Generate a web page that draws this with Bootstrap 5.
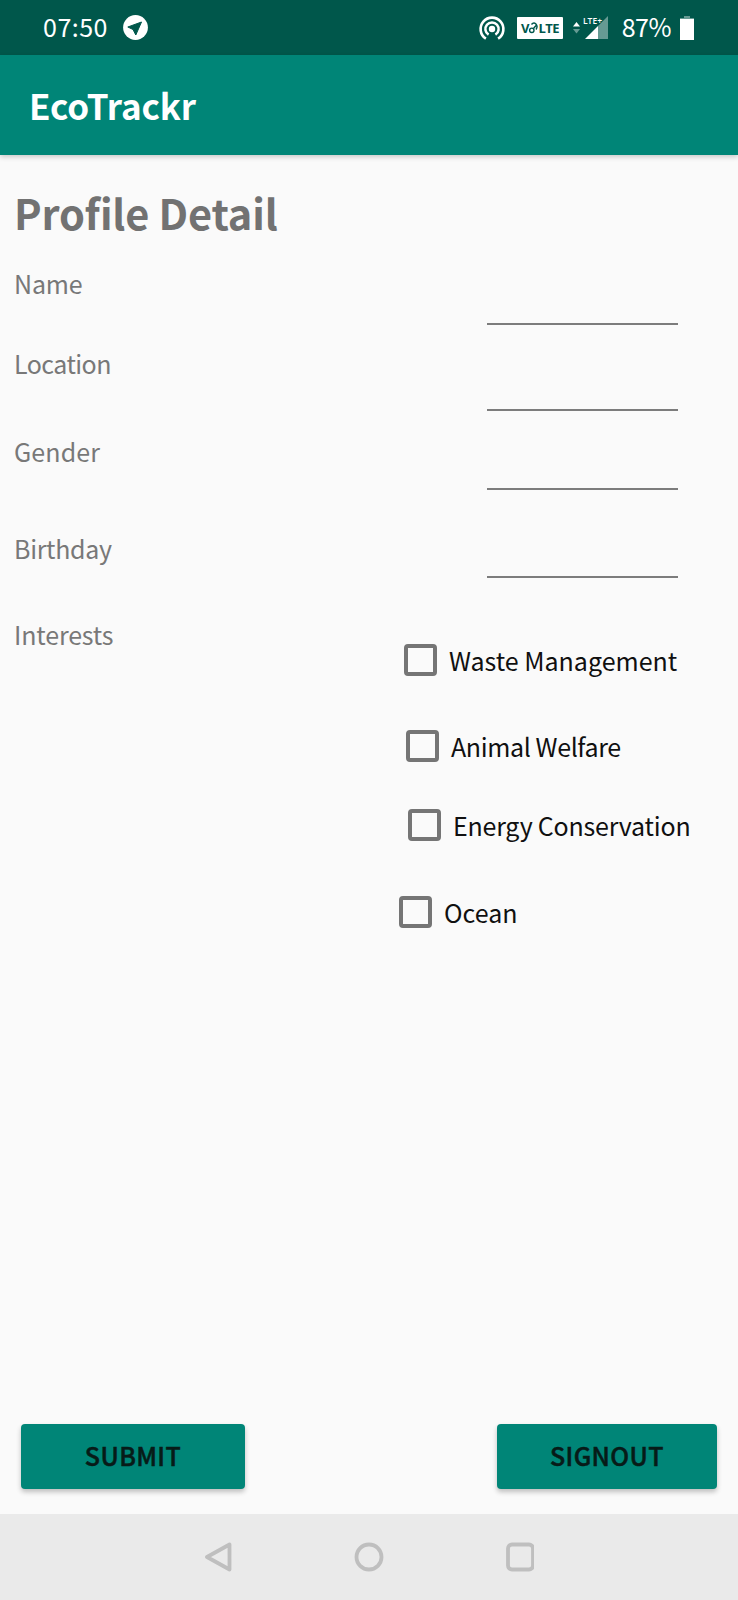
<!DOCTYPE html>
<html lang="en">
<head>
<meta charset="utf-8">
<meta name="viewport" content="width=device-width, initial-scale=1">
<title>EcoTrackr</title>
<link href="https://cdn.jsdelivr.net/npm/bootstrap@5.3.0/dist/css/bootstrap.min.css" rel="stylesheet">
<style>
body{font-family:"Noto Sans CJK SC","Open Sans",sans-serif;font-size:25px;line-height:36px;background:#fafafa;color:#727272;min-height:1600px}
.statusbar{height:55px;background:#00574b;color:#fff;padding:0 44px 0 43px}
.statusbar svg{flex:none;overflow:visible}
.clock{letter-spacing:.5px;padding-bottom:3px}
.telegram{margin-left:15px}
.battery-text{letter-spacing:-.5px;padding-bottom:3px;margin:0 9px 0 12px}
.volte{margin:0 5px 0 8px}
.appbar{height:100px;background:#008577;box-shadow:0 2px 5px rgba(0,0,0,.2);padding:0 29px 1px}
.appbar .navbar-brand{font-size:35px;line-height:50px;letter-spacing:-.1px;color:#fff}
.page-title{font-size:41.5px;line-height:60px;margin:27px 0 -2px;padding-left:14px;letter-spacing:-.15px}
.field{padding:0 60px 0 14px}
.field label,.interests .legend{color:#787878}
.field .form-control{width:191px;height:44px;border:0;border-bottom:2px solid #7c7c7c;border-radius:0;background:transparent;padding:0 4px}
.f-name{height:85px}.f-name label{margin-top:25px;letter-spacing:-.2px}
.f-location{height:86px}.f-location label{margin-top:20px;letter-spacing:-.55px}
.f-gender{height:79px}.f-gender label{margin-top:22px;letter-spacing:.1px}
.f-birthday{height:88px}.f-birthday label{margin-top:40px;letter-spacing:-.3px}
.interests{padding-left:14px}
.interests .legend{margin-top:38px;width:385px;letter-spacing:-.15px}
.choices{color:#101010;padding-top:64px}
.choice{height:36px}
.choice .form-check-input{width:32.5px;height:32px;margin:0 12.5px 0 0;border:4px solid #757575;border-radius:4px;background:transparent;flex:none}
.choice label{white-space:nowrap}
.c-waste{margin-left:5px}
.c-animal{margin:50px 0 0 7px;letter-spacing:-.38px}
.c-energy{margin:43px 0 0 9px;letter-spacing:-.22px}
.c-ocean{margin:51px 0 0 0}
.actions{padding:0 21px 25px}
.actions .btn{height:65.5px;border-radius:4px;border:0;background:#008577;color:#071b18;font-size:25px;line-height:36px;font-weight:500;letter-spacing:.4px;-webkit-text-stroke:.5px #071b18;box-shadow:0 3px 5px rgba(0,0,0,.24);padding:0 0 3px}
.btn-submit{width:224px}.btn-signout{width:220px}
.systemnav{height:86px;background:#eaeaea}
</style>
</head>
<body class="d-flex flex-column">
<header>
  <div class="statusbar d-flex align-items-center">
    <span class="clock">07:50</span>
    <svg class="telegram" width="25" height="25" viewBox="0 0 25 25"><circle cx="12.5" cy="12.5" r="12.4" fill="#fff"/><path d="M18.500 7 4.800 12l5.200 2.500L12.800 20z" fill="#00574b" stroke="#00574b" stroke-linejoin="round"/></svg>
    <svg class="ms-auto" width="26" height="26" viewBox="0 0 26 26" fill="none" stroke="#fff" stroke-width="2.600"><circle cx="13" cy="14" r="3.200" fill="#fff" stroke="none"/><path d="M9.600 19.700a6.600 6.600 0 1 1 6.800 0M6.900 23.700a11.400 11.400 0 1 1 12.200 0"/></svg>
    <svg class="volte" width="54" height="26" viewBox="0 0 54 26"><rect x="4" y="2" width="46" height="22" rx="1" fill="#fff"/><g fill="#00574b" font-family="Open Sans" font-size="13" font-weight="700"><text x="8" y="18">V</text><text x="25.500" y="18" textLength="21">LTE</text></g><g fill="none" stroke="#00574b" stroke-width="1.400"><circle cx="18.800" cy="15.300" r="2.200"/><path d="M20.500 13.500l2.500-3M18.500 9.500c1.500-2 4-2 5 .5M23 14.500c1.500-2 1.500-4-.5-6"/></g></svg>
    <svg width="38" height="26" viewBox="0 0 38 26"><path d="M1 11.500 4.500 7 8 11.500z" fill="#fff"/><path d="M1 14h7l-3.500 4.500z" fill="#fff" opacity=".4"/><path d="M36 1v23H26V11z" fill="#fff" opacity=".4"/><path d="M26 11v13H13z" fill="#fff"/><text x="11" y="8.500" font-family="Open Sans" font-size="8.500" font-weight="600" fill="#fff">LTE+</text></svg>
    <span class="battery-text">87%</span>
    <svg class="battery" width="14" height="24" viewBox="0 0 14 24"><path d="M4 0h6v2h4v3H0V2h4z" fill="#fff" opacity=".4"/><path d="M0 3h14v21H0z" fill="#fff"/></svg>
  </div>
  <nav class="appbar navbar"><span class="navbar-brand fw-bold m-0 p-0">EcoTrackr</span></nav>
</header>
<main class="flex-grow-1 d-flex flex-column">
  <h1 class="page-title fw-bold">Profile Detail</h1>
  <form class="flex-grow-1 d-flex flex-column">
    <div class="field f-name d-flex justify-content-between"><label for="name">Name</label><input id="name" class="form-control align-self-end"></div>
    <div class="field f-location d-flex justify-content-between"><label for="location">Location</label><input id="location" class="form-control align-self-end"></div>
    <div class="field f-gender d-flex justify-content-between"><label for="gender">Gender</label><input id="gender" class="form-control align-self-end"></div>
    <div class="field f-birthday d-flex justify-content-between"><label for="birthday">Birthday</label><input id="birthday" class="form-control align-self-end"></div>
    <div class="interests d-flex">
      <div class="legend">Interests</div>
      <div class="choices">
        <div class="choice c-waste d-flex align-items-center"><input class="form-check-input" type="checkbox" id="waste"><label for="waste">Waste Management</label></div>
        <div class="choice c-animal d-flex align-items-center"><input class="form-check-input" type="checkbox" id="animal"><label for="animal">Animal Welfare</label></div>
        <div class="choice c-energy d-flex align-items-center"><input class="form-check-input" type="checkbox" id="energy"><label for="energy">Energy Conservation</label></div>
        <div class="choice c-ocean d-flex align-items-center"><input class="form-check-input" type="checkbox" id="ocean"><label for="ocean">Ocean</label></div>
      </div>
    </div>
    <div class="actions d-flex justify-content-between mt-auto">
      <button type="button" class="btn btn-submit">SUBMIT</button>
      <button type="button" class="btn btn-signout">SIGNOUT</button>
    </div>
  </form>
</main>
<footer class="systemnav d-flex justify-content-center align-items-center">
  <svg width="330" height="30" viewBox="0 0 330 30" fill="none" stroke="#bfbfbf" stroke-width="3.800" stroke-linejoin="round"><path d="M3 15 25.500 2.500v25z"/><circle cx="165" cy="15" r="12.500"/><rect x="304" y="2.500" width="25" height="25" rx="4"/></svg>
</footer>
<script src="https://cdn.jsdelivr.net/npm/bootstrap@5.3.0/dist/js/bootstrap.bundle.min.js"></script>
</body>
</html>
